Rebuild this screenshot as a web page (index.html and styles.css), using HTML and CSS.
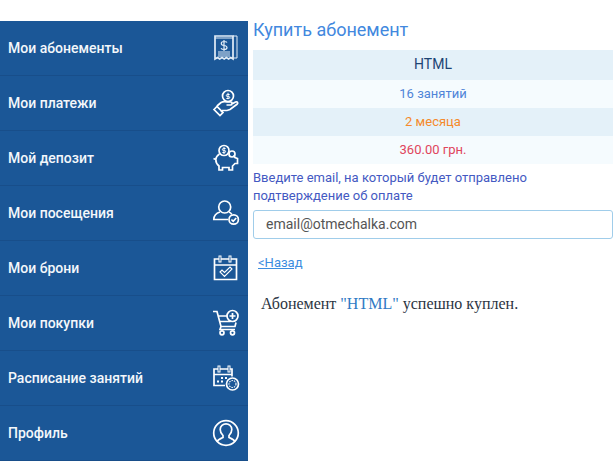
FILE: index.html
```html
<!DOCTYPE html>
<html lang="ru">
<head>
<meta charset="utf-8">
<title>Купить абонемент</title>
<link rel="stylesheet" href="styles.css">
</head>
<body>
<div class="page">
<nav class="side">
  <a class="item"><span>Мои абонементы</span>
    <svg class="ic soft" viewBox="0 0 26 26"><path d="M2 1h18v23l-2.200-1.500-2.200 1.500-2.200-1.500-2.200 1.500-2.200-1.500-2.300 1.500-2.200-1.500L2 24z"/><path d="M20 1h4v22h-4M2 3h18" stroke-width="1"/><path d="M14 7.500c-.5-.8-1.500-1-3-1s-2.700.7-2.700 2 1.200 1.800 2.700 2 3 .7 3 2-1.500 2-3 2-2.500-.4-3-1.300M11 5v11" stroke-width="1.200"/><path d="M5 17h12M5 19h12M5 21h12" stroke-width="1"/></svg></a>
  <a class="item"><span>Мои платежи</span>
    <svg class="ic" viewBox="0 0 26 26"><circle cx="15" cy="6" r="5.500"/><path d="M15 2.800v6.400M16.600 4.500h-2.300a1 1 0 0 0 0 2h1.400a1 1 0 0 1 0 2h-2.300" stroke-width="1"/><path d="M4 16l4-3.500c2-1 4-1 6-.5h4c1.500 0 1.500 3 0 3h-4.500M18 14.500l4.500-2.500c2-.8 3 1 1.500 2.300l-7 5.200-3 1H9.500L8 22"/><path d="M1 19.500l3-3 6 6-3 3z"/></svg></a>
  <a class="item"><span>Мой депозит</span>
    <svg class="ic" viewBox="0 0 26 26"><circle cx="11" cy="5.500" r="5"/><path d="M12.600 3.500h-2.200a1 1 0 0 0 0 2h1.200a1 1 0 0 1 0 2H9.400M11 2v7" stroke-width="1"/><circle cx="19" cy="9" r="3"/><path d="M6.500 9C4 10.500 3 12.500 2.800 14.500L.5 13.500M2.800 14.500c0 3 1.200 5 3.200 6.500v4h3.500v-2.500h6.500V25h3.500v-4l2.500-2.500h2.500v-5l-2.500-1c-.5-1-1-1.500-1.500-2"/></svg></a>
  <a class="item"><span>Мои посещения</span>
    <svg class="ic" viewBox="0 0 26 26"><circle cx="11.700" cy="7" r="6"/><path d="M15 19.500H.8c0-4.500 3-6.500 6.200-7.500M16 12c1.200.5 2 1 2.800 2.500"/><circle cx="20.700" cy="19.500" r="4.700"/><path d="M18.400 19.500l1.800 1.800 3-3.300"/></svg></a>
  <a class="item"><span>Мои брони</span>
    <svg class="ic" viewBox="0 0 26 26"><path d="M1.500 4h22v20.500h-22zM1.500 10h22"/><rect x="6" y="1" width="2" height="6" fill="#1b5797" stroke-width="1"/><rect x="16" y="1" width="2" height="6" fill="#1b5797" stroke-width="1"/><path d="M7 17l2-2 2.500 2.500L17 12l2 2-7.500 7.500z" stroke-width="1.100"/></svg></a>
  <a class="item"><span>Мои покупки</span>
    <svg class="ic" viewBox="0 0 26 26"><path d="M0 1.500h4l4 15h14l1-4M5 6h9M6.500 11.500h11M8 16.500l-1 3h15"/><circle cx="9" cy="22.800" r="2"/><circle cx="19.500" cy="22.800" r="2"/><circle cx="19.500" cy="6" r="5.500"/><path d="M19.500 3v6M16.500 6h6"/></svg></a>
  <a class="item"><span>Расписание занятий</span>
    <svg class="ic" viewBox="0 0 26 26"><path d="M12 20.500H1V4h18v7.500M1 9.500h18"/><rect x="5" y="1" width="2" height="6" fill="#1b5797" stroke-width="1"/><rect x="15" y="1" width="2" height="6" fill="#1b5797" stroke-width="1"/><path d="M4 16.500h2M8 16.500h2M8 13h2M12 13h2" stroke-width="2"/><circle cx="19.500" cy="19" r="6"/><circle cx="19.500" cy="19" r="3.500" stroke-dasharray="1.500 1" stroke-width="1.100"/></svg></a>
  <a class="item"><span>Профиль</span>
    <svg class="ic" viewBox="0 0 26 26"><circle cx="13" cy="13" r="12.300"/><path d="M4 22c1-3 4-3.500 6-4.500v-2c-2-2-2.800-4-2.800-6C7.200 6 10 3.800 13 3.800s5.800 2.200 5.800 5.700c0 2-.8 4-2.800 6v2c2 1 5 1.500 6 4.500"/></svg></a>
</nav>
<main class="main">
  <h1 class="title">Купить абонемент</h1>
  <div class="tbl">
    <div class="row name">HTML</div>
    <div class="row light count">16 занятий</div>
    <div class="row term">2 месяца</div>
    <div class="row light price">360.00 грн.</div>
  </div>
  <p class="label">Введите email, на который будет отправлено подтверждение об оплате</p>
  <input class="email" type="text" value="email@otmechalka.com">
  <a class="back" href="#">&lt;Назад</a>
  <p class="done">Абонемент <span class="hl">"HTML"</span> успешно куплен.</p>
</main>
</div>
</body>
</html>
```
FILE: styles.css
```css
* { box-sizing: border-box; }
html, body { margin: 0; height: 100%; overflow: hidden; background: #fff; }
.page { display: flex; width: 616px; height: 461px; font-family: Roboto, sans-serif; }
.side { width: 248px; margin-top: 21px; background: #1b5797; flex: none; }
.item { display: flex; align-items: center; justify-content: space-between; height: 55px; padding: 0 9px 0 8px; color: #f4f7fb; font-size: 14px; font-weight: 500; border-bottom: 1px solid #184e8a; }
.ic { width: 26px; height: 26px; fill: none; stroke: #fff; stroke-width: 1.700; overflow: visible; }
.soft { stroke: #e2edf7; }
.main { width: 368px; padding: 0 3px 0 5px; }
.title { margin: 19px 0 0; font-size: 18px; line-height: 21px; font-weight: 400; color: #4288de; }
.tbl { margin-top: 10px; }
.row { display: flex; align-items: center; justify-content: center; height: 28px; padding-bottom: 2px; font-size: 13px; background: #e4f1f9; }
.row.light { background: #f5fbfe; }
.name { height: 30px; font-size: 14px; color: #1d4474; }
.count { color: #4f84d8; }
.term { color: #f58a2b; }
.price { color: #e0455c; }
.label { margin: 5px 0 0; font-size: 13px; line-height: 18px; color: #4459c2; }
.email { display: block; width: 360px; height: 29px; margin-top: 5px; padding: 0 12px 2px; border: 1px solid #a0cdea; border-radius: 3px; font: 14px Roboto, sans-serif; color: #555; outline: none; }
.back { display: block; margin: 16px 0 0 5px; font-size: 13px; line-height: 16px; color: #3b8de0; text-decoration: underline; }
.done { margin: 24px 0 0 8px; font: 16px/18px "Liberation Serif", serif; color: #2b3442; }
.hl { color: #2f7ac4; }
```
